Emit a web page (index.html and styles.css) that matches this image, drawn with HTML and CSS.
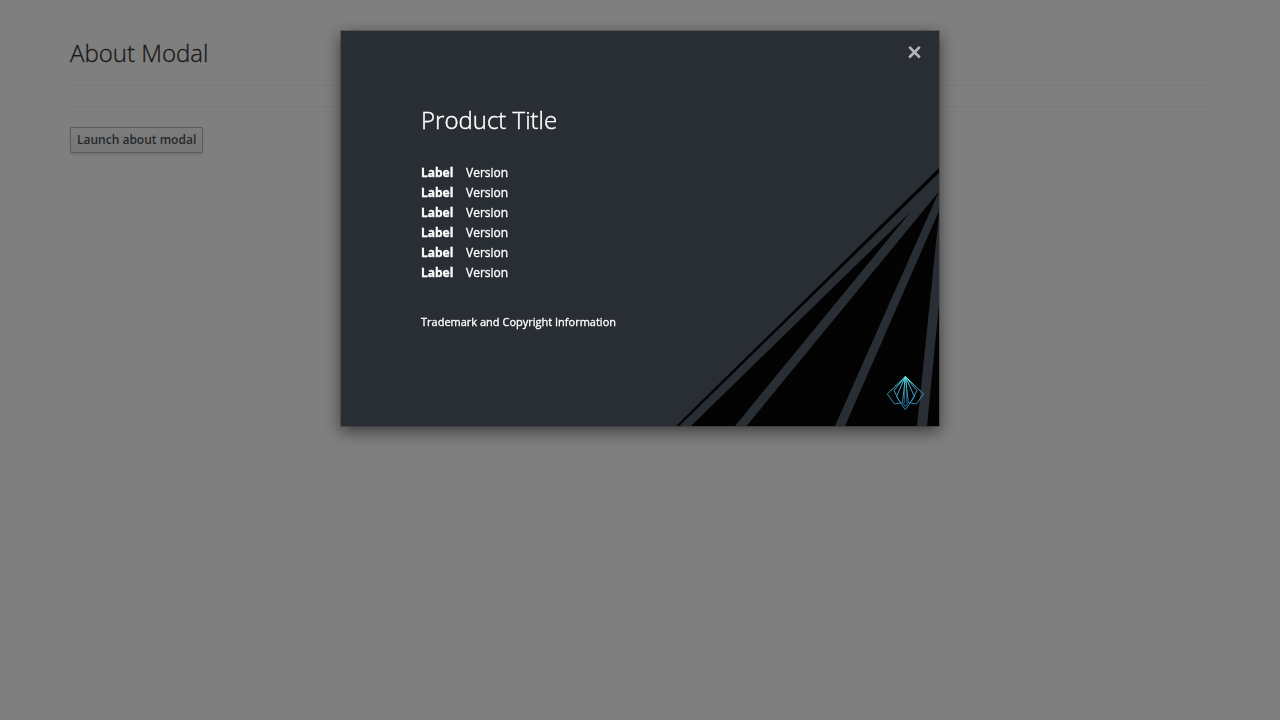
FILE: index.html
```html
<!DOCTYPE html>
<html lang="en">
<head>
<meta charset="utf-8">
<title>About Modal</title>
<link rel="stylesheet" href="styles.css">
</head>
<body>
<main class="page">
  <h1 class="page-title">About Modal</h1>
  <hr class="rule">
  <hr class="rule">
  <button class="launch" type="button">Launch about modal</button>
</main>
<div class="backdrop">
  <section class="modal" role="dialog" aria-label="Product Title">
    <svg class="modal-art" viewBox="0 0 598 395" aria-hidden="true">
      <path d="M335 395L598 137V141.700L338.200 395Z"/>
      <path d="M350 395L569 181.500L394 395Z"/>
      <path d="M405.500 395L598 160.500L494 395Z"/>
      <path d="M504 395L598 180V183L576 395Z"/>
      <path d="M586 395L598 274V395Z"/>
    </svg>
    <header class="modal-header">
      <button class="close" type="button" aria-label="Close">
        <svg viewBox="0 0 14 14" width="14" height="14"><path d="M1.200 1.900L11.800 12.500M11.800 1.900L1.200 12.500"/></svg>
      </button>
    </header>
    <div class="modal-body">
      <h2 class="product">Product Title</h2>
      <ul class="versions">
        <li><strong>Label</strong>Version</li>
        <li><strong>Label</strong>Version</li>
        <li><strong>Label</strong>Version</li>
        <li><strong>Label</strong>Version</li>
        <li><strong>Label</strong>Version</li>
        <li><strong>Label</strong>Version</li>
      </ul>
      <p class="trademark">Trademark and Copyright Information</p>
    </div>
    <footer class="modal-footer">
      <svg class="logo" viewBox="0 0 38 36" width="38" height="36" aria-hidden="true">
        <defs><linearGradient id="g" gradientUnits="userSpaceOnUse" x1="0" y1="0" x2="0" y2="35"><stop offset="0" stop-color="#5fe9f5"/><stop offset=".4" stop-color="#42a6bd"/><stop offset="1" stop-color="#2174ae"/></linearGradient></defs>
        <g fill="none" stroke="url(#g)">
          <path d="M19.400 1.500L1.300 19L8.500 29L16.500 27.500Z"/><path d="M19.400 1.500L37.500 19L30.300 29L22.300 27.500Z"/>
          <path d="M19.400 1.500L8 15.500L13.500 26.500"/><path d="M19.400 1.500L30.800 15.500L25.300 26.500"/>
          <path d="M19.400 1.500L10.400 21.500L19.400 34.800L28.400 21.500Z"/><path d="M16.500 27.500L19.400 31.500L22.300 27.500"/>
          <path d="M18.600 4L18.400 28M20.200 4L20.400 28" stroke-width=".6"/>
        </g>
      </svg>
    </footer>
  </section>
</div>
</body>
</html>
```
FILE: styles.css
```css
* { box-sizing: border-box; }
body { margin: 0; height: 720px; overflow: hidden; background: #fff; color: #333; font: 12px/20px "Open Sans", sans-serif; }
.page { padding: 40px 70px 0; }
.page-title { margin: 0 0 19px; font-size: 24px; line-height: 26px; font-weight: 300; -webkit-text-stroke: .3px #333; }
.rule { margin: 0 0 20px; border: 0; border-top: 1px solid #f1f1f1; }
.launch { display: block; height: 26px; padding: 0 6px; border: 1px solid #b7b7b7; border-radius: 1px; background: linear-gradient(#fafafa, #ededed); box-shadow: 0 2px 3px rgba(3, 3, 3, .1); color: #4d5258; font: 600 12px/22px "Open Sans", sans-serif; }
.backdrop { position: fixed; inset: 0; padding-top: 30px; background: rgba(0, 0, 0, .5); }
.modal { position: relative; display: flex; flex-direction: column; width: 600px; height: 397px; margin: 0 auto; border: 1px solid rgba(0, 0, 0, .2); background: #292e34; background-clip: padding-box; box-shadow: 0 5px 15px rgba(0, 0, 0, .5); color: #fff; }
.modal-art { position: absolute; inset: 0; width: 598px; height: 395px; fill: #030303; }
.modal-header { position: relative; display: flex; justify-content: flex-end; height: 73px; padding: 14px 17px; }
.close { width: 14px; height: 14px; padding: 0; border: 0; background: none; }
.close svg { display: block; fill: none; stroke: #b5b7b9; stroke-width: 2.6; }
.modal-body { position: relative; flex: 1; padding: 0 80px; }
.product { margin: 0 0 27px; font-size: 24px; line-height: 32px; font-weight: 300; -webkit-text-stroke: .4px #fff; }
.versions { margin: 0 0 30px; padding: 0; list-style: none; font-weight: 400; -webkit-text-stroke: .3px #fff; }
.versions li { display: flex; }
.versions strong { width: 45px; font-weight: 700; }
.trademark { margin: 0; font-size: 11px; font-weight: 400; line-height: 18px; -webkit-text-stroke: .3px #fff; }
.modal-footer { position: relative; display: flex; justify-content: flex-end; padding: 0 15px 15px; }
.logo { display: block; }
```
